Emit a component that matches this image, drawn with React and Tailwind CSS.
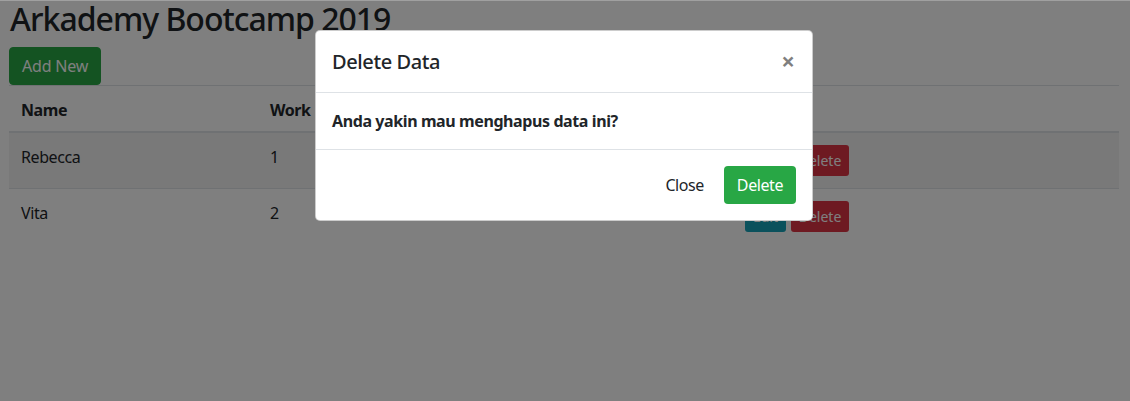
export default function App() {
  const rows = [
    { name: "Rebecca", work: "1", salary: "" },
    { name: "Vita", work: "2", salary: "" },
  ];
  const th = "border-t border-b-2 border-[#dee2e6] px-3 pt-3 pb-[9px] text-left align-bottom font-bold leading-6";
  const td = "border-t border-[#dee2e6] p-3 align-top leading-6";
  return (
    <div
      className="relative h-[401px] w-full overflow-hidden bg-white text-[#212529] tracking-[-0.4px]"
      style={{ fontFamily: '"Noto Sans", "Open Sans", sans-serif' }}
    >
      <div className="ml-[9px] w-[1110px]">
        <h1 className="mb-[9px] pl-[1px] text-[32px] font-medium leading-[1.2] tracking-[-1px]">Arkademy Bootcamp 2019</h1>
        <button className="h-[38px] rounded-[4px] border border-[#28a745] bg-[#28a745] px-3 text-base leading-6 tracking-[-0.2px] text-white">
          Add New
        </button>
        <table className="w-full table-fixed border-collapse text-base">
          <colgroup>
            <col className="w-[249px]" />
            <col className="w-[237px]" />
            <col className="w-[238px]" />
            <col />
          </colgroup>
          <thead>
            <tr>
              <th className={th}>Name</th>
              <th className={th}>Work</th>
              <th className={th}>Salary</th>
              <th className={th}>Action</th>
            </tr>
          </thead>
          <tbody>
            {rows.map((r, i) => (
              <tr key={r.name} className={i % 2 === 0 ? "bg-black/5" : ""}>
                <td className={td}>{r.name}</td>
                <td className={td}>{r.work}</td>
                <td className={td}>{r.salary}</td>
                <td className={td}>
                  <div className="flex gap-[5px]">
                    <button className="h-[31px] w-[41px] rounded-[3px] bg-[#17a2b8] text-sm leading-[21px] tracking-normal text-white">Edit</button>
                    <button className="h-[31px] w-[58px] rounded-[3px] bg-[#dc3545] text-sm leading-[21px] tracking-normal text-white">Delete</button>
                  </div>
                </td>
              </tr>
            ))}
          </tbody>
        </table>
      </div>

      <div className="absolute inset-0 border-t border-[#a0a0a0] bg-black/50" />

      <div className="absolute left-[315px] top-[30px] w-[498px] rounded-[5px] border border-black/20 bg-white">
        <div className="flex items-start justify-between border-b border-[#dee2e6] px-4 pt-4 pb-[15px]">
          <h5 className="text-[20px] font-medium leading-[30px]">Delete Data</h5>
          <span className="mr-[1px] text-[24px] font-bold leading-[28px] tracking-normal text-black/50">×</span>
        </div>
        <div className="border-b border-[#dee2e6] p-4">
          <p className="font-bold leading-6">Anda yakin mau menghapus data ini?</p>
        </div>
        <div className="flex items-center justify-end gap-2 px-4 py-4">
          <button className="h-[38px] px-3 text-base leading-6 text-[#212529]">Close</button>
          <button className="h-[38px] w-[72px] rounded-[4px] bg-[#28a745] text-base leading-6 text-white">Delete</button>
        </div>
      </div>
    </div>
  );
}
